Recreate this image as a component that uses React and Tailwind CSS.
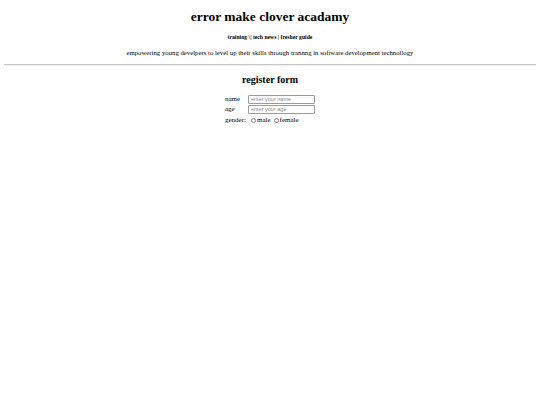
export default function App() {
  return (
    <div className="min-h-[405px] bg-white px-[4px] text-black antialiased" style={{ fontFamily: '"Liberation Serif", "Times New Roman", serif' }}>
      <div className="pt-[9px] text-center">
        <h1 className="text-[13.5px] font-bold leading-[16px]">error make clover acadamy</h1>
        <div className="mt-[9px] text-[5.7px] font-bold leading-[6px]">training \| tech news | fresher guide</div>
        <p className="mt-[8px] text-[6.75px] leading-[9px]">empowering young develpers to level up their skills through trannng in software development technollogy</p>
      </div>
      <div className="mt-[7px] h-[2px] border-t border-[#c8c8c8] bg-[#eeeeee]"></div>
      <div className="mt-[8px] text-center">
        <h2 className="text-[10px] font-bold leading-[12px]">register form</h2>
      </div>
      <div className="mt-[8px] flex justify-center">
        <table className="border-separate border-spacing-[1px] text-[7px] leading-[9px]">
          <tbody>
            <tr>
              <td className="p-0 pr-[1px] align-middle">name</td>
              <td className="p-0">
                <input placeholder="enter your name" className="block h-[9px] w-[67px] rounded-[1px] border border-[#9a9a9a] px-[2px] text-[5.5px] placeholder:text-[#8a8a8a]" style={{ fontFamily: '"Liberation Sans", Arial, sans-serif' }} />
              </td>
            </tr>
            <tr>
              <td className="p-0 pr-[1px] align-middle">age</td>
              <td className="p-0">
                <input placeholder="enter your age" className="block h-[9px] w-[67px] rounded-[1px] border border-[#9a9a9a] px-[2px] text-[5.5px] placeholder:text-[#8a8a8a]" style={{ fontFamily: '"Liberation Sans", Arial, sans-serif' }} />
              </td>
            </tr>
            <tr>
              <td className="p-0 pr-[1px] pt-[1px] align-middle">gender:</td>
              <td className="p-0 pt-[1px]">
                <span className="flex items-center">
                  <span className="ml-[3px] mr-[1px] inline-block h-[5px] w-[5px] rounded-full border border-[#888]"></span>
                  <span>male</span>
                  <span className="ml-[3px] mr-[1px] inline-block h-[5px] w-[5px] rounded-full border border-[#888]"></span>
                  <span>female</span>
                </span>
              </td>
            </tr>
          </tbody>
        </table>
      </div>
    </div>
  );
}
